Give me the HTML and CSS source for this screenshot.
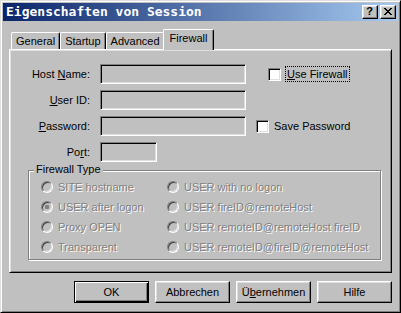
FILE: index.html
```html
<!DOCTYPE html>
<html lang="de">

<head>
    <meta charset="UTF-8">
    <title>Eigenschaften von Session</title>
    <link rel="stylesheet" href="styles.css">
</head>

<body>
    <div class="window">
        <div class="titlebar">
            <span class="title">Eigenschaften von Session</span>
            <div class="title-buttons">
                <button class="title-btn help">?</button>
                <button class="title-btn close">
                    <svg width="8" height="7" viewBox="0 0 8 7" shape-rendering="crispEdges">
                        <path fill="#000" d="M0 0h2v1H0zM6 0h2v1H6zM1 1h2v1H1zM5 1h2v1H5zM2 2h4v1H2zM3 3h2v1H3zM2 4h4v1H2zM1 5h2v1H1zM5 5h2v1H5zM0 6h2v1H0zM6 6h2v1H6z"/>
                    </svg>
                </button>
            </div>
        </div>

        <div class="dialog-body">
            <div class="tabs">
                <div class="tab">General</div>
                <div class="tab">Startup</div>
                <div class="tab">Advanced</div>
                <div class="tab active">Firewall</div>
            </div>

            <div class="panel">
                <div class="fields">
                    <label class="field-label" for="host">Host <u>N</u>ame:</label>
                    <input type="text" id="host" class="field" disabled>
                    <div class="check use-firewall">
                        <input type="checkbox" id="use-firewall">
                        <label for="use-firewall" class="focused"><u>U</u>se Firewall</label>
                    </div>

                    <label class="field-label" for="user"><u>U</u>ser ID:</label>
                    <input type="text" id="user" class="field" disabled>
                    <div></div>

                    <label class="field-label" for="pass"><u>P</u>assword:</label>
                    <input type="text" id="pass" class="field" disabled>
                    <div class="check">
                        <input type="checkbox" id="save-pass">
                        <label for="save-pass">Save Password</label>
                    </div>

                    <label class="field-label" for="port">Po<u>r</u>t:</label>
                    <input type="text" id="port" class="field port" disabled>
                    <div></div>
                </div>

                <div class="group">
                    <div class="group-label">Firewall Type</div>
                    <div class="radios">
                        <label class="radio"><input type="radio" name="fwtype" disabled>SITE hostname</label>
                        <label class="radio"><input type="radio" name="fwtype" disabled>USER with no logon</label>
                        <label class="radio"><input type="radio" name="fwtype" disabled checked>USER after logon</label>
                        <label class="radio"><input type="radio" name="fwtype" disabled>USER fireID@remoteHost</label>
                        <label class="radio"><input type="radio" name="fwtype" disabled>Proxy OPEN</label>
                        <label class="radio"><input type="radio" name="fwtype" disabled>USER remoteID@remoteHost fireID</label>
                        <label class="radio"><input type="radio" name="fwtype" disabled>Transparent</label>
                        <label class="radio"><input type="radio" name="fwtype" disabled>USER remoteID@fireID@remoteHost</label>
                    </div>
                </div>
            </div>

            <div class="buttons">
                <button class="btn default">OK</button>
                <button class="btn">Abbrechen</button>
                <button class="btn">Ü<u>b</u>ernehmen</button>
                <button class="btn">Hilfe</button>
            </div>
        </div>
    </div>
</body>

</html>
```

FILE: styles.css
```css
* {
    box-sizing: border-box;
}

body {
    margin: 0;
    font-family: "Liberation Sans", Arial, sans-serif;
    font-size: 11px;
    color: #000;
    background-color: #c0c0c0;
}

u {
    text-decoration: underline;
    text-underline-offset: 1px;
}

.window {
    width: 401px;
    height: 313px;
    background-color: #c0c0c0;
    border: 1px solid;
    border-color: #dfdfdf #000 #000 #dfdfdf;
    box-shadow: inset 1px 1px #fff, inset -1px -1px #808080;
    padding: 2px;
}

/* title bar */
.titlebar {
    height: 18px;
    display: flex;
    align-items: center;
    justify-content: space-between;
    padding: 0 2px 0 3px;
    background: linear-gradient(to right, #0a246a, #a6caf0);
}

.title {
    color: #fff;
    font-family: "DejaVu Sans Mono", monospace;
    font-weight: bold;
    font-size: 13px;
    line-height: 18px;
}

.title-buttons {
    display: flex;
    gap: 2px;
}

.title-btn {
    width: 16px;
    height: 14px;
    padding: 0 1px 1px 0;
    margin: 0;
    display: flex;
    align-items: center;
    justify-content: center;
    background-color: #c0c0c0;
    border: 1px solid;
    border-color: #fff #000 #000 #fff;
    box-shadow: inset -1px -1px #808080, inset 1px 1px #dfdfdf;
    font: bold 11px "Liberation Sans", Arial, sans-serif;
    line-height: 11px;
    color: #000;
}

/* tabs */
.dialog-body {
    padding: 0 6px;
}

.tabs {
    display: flex;
    align-items: flex-end;
    height: 20px;
    margin-top: 8px;
    padding-left: 2px;
}

.tab {
    height: 17px;
    padding: 0 4px 1px;
    display: flex;
    align-items: center;
    border: 1px solid;
    border-color: #fff #000 transparent #fff;
    border-bottom: none;
    border-radius: 2px 2px 0 0;
    box-shadow: inset -1px 0 #808080;
    background-color: #c0c0c0;
}

.tab.active {
    position: relative;
    z-index: 1;
    height: 21px;
    margin: 0 -2px -1px;
    padding: 0 6px 4px;
}

.panel {
    height: 224px;
    border: 1px solid;
    border-color: #fff #000 #000 #fff;
    box-shadow: inset 1px 1px #dfdfdf, inset -1px -1px #808080;
    padding-top: 14px;
}

/* text fields */
.fields {
    display: grid;
    grid-template-columns: 80px 146px auto;
    grid-auto-rows: 20px;
    column-gap: 10px;
    row-gap: 6px;
    align-items: center;
}

.field-label {
    text-align: right;
}

.field {
    width: 146px;
    height: 20px;
    margin: 0;
    padding: 0 2px;
    background-color: #c0c0c0;
    border: 1px solid;
    border-color: #808080 #fff #fff #808080;
    box-shadow: inset 1px 1px #000, inset -1px -1px #dfdfdf;
    font: inherit;
}

.field.port {
    width: 57px;
}

.check {
    display: flex;
    align-items: center;
    gap: 5px;
}

.check.use-firewall {
    margin-left: 12px;
    gap: 4px;
}

.focused {
    border: 1px dotted #000;
    padding: 1px 1px 1px 1px;
    line-height: 12px;
}

input[type="checkbox"] {
    appearance: none;
    width: 13px;
    height: 13px;
    margin: 0;
    background-color: #fff;
    border: 1px solid;
    border-color: #808080 #fff #fff #808080;
    box-shadow: inset 1px 1px #000, inset -1px -1px #dfdfdf;
}

/* group box */
.group {
    height: 90px;
    margin: 8px 10px 0 18px;
    border: 1px solid #808080;
    box-shadow: inset 1px 1px #fff, 1px 1px #fff;
}

.group-label {
    width: fit-content;
    margin: -8px 0 0 5px;
    padding: 0 2px;
    line-height: 13px;
    background-color: #c0c0c0;
}

.radios {
    display: grid;
    grid-template-columns: 126px 1fr;
    grid-auto-rows: 20px;
    margin-top: 1px;
    padding-left: 12px;
}

.radio {
    display: flex;
    align-items: center;
    gap: 5px;
    color: #808080;
    text-shadow: 1px 1px 0 #fff;
    white-space: nowrap;
}

input[type="radio"] {
    appearance: none;
    width: 12px;
    height: 12px;
    margin: 0;
    border-radius: 50%;
    border: 1px solid;
    border-color: #808080 #fff #fff #808080;
    box-shadow: inset 1px 1px #404040, inset -1px -1px #dfdfdf;
    background-color: #c0c0c0;
}

input[type="radio"]:checked {
    background: radial-gradient(circle, #808080 2px, #c0c0c0 2.5px);
}

/* dialog buttons */
.buttons {
    display: flex;
    justify-content: flex-end;
    gap: 6px;
    margin-top: 8px;
}

.btn {
    width: 75px;
    height: 22px;
    margin: 0;
    padding: 0;
    background-color: #c0c0c0;
    border: 1px solid;
    border-color: #fff #000 #000 #fff;
    box-shadow: inset -1px -1px #808080, inset 1px 1px #dfdfdf;
    font: inherit;
    color: #000;
}

.btn.default {
    border-color: #000;
    box-shadow: inset 1px 1px #fff, inset -1px -1px #000, inset -2px -2px #808080;
}
```
